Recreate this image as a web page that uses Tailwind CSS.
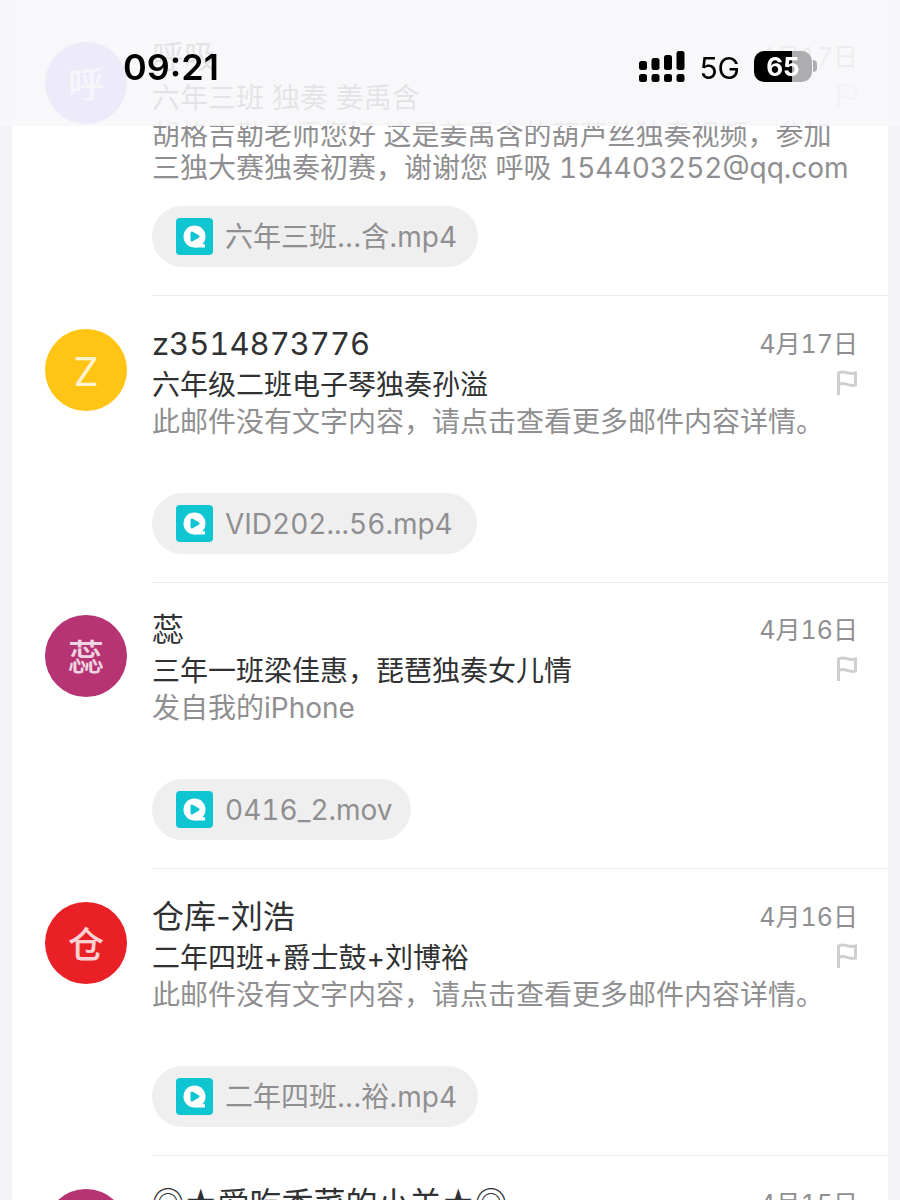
<!DOCTYPE html>
<html lang="zh-CN">
<head>
    <meta charset="UTF-8">
    <meta name="viewport" content="width=device-width, initial-scale=1.0">
    <title>收件箱</title>
    <script src="https://cdn.jsdelivr.net/npm/@tailwindcss/browser@4"></script>
</head>
<body class="bg-[#f2f2f7] font-['Inter','Noto_Sans_CJK_SC',sans-serif] text-[#303133]">
    <!-- Shared icons -->
    <svg class="hidden" aria-hidden="true">
        <symbol id="flag" viewBox="0 0 22 26">
            <path d="M2.500 25V3C6 1 9 2 12 3C15 3.800 17 3.500 19.500 3V15C16 16 13 15 11 14.300C8 13.300 5 13.500 2.500 14.500" fill="none" stroke="currentColor" stroke-width="3"/>
        </symbol>
        <symbol id="video" viewBox="0 0 37 37">
            <rect width="37" height="37" rx="4" fill="#10c5d2"/>
            <circle cx="18.500" cy="18.500" r="11" fill="#fff"/>
            <path d="M19 25L25 24Q26 26.500 29 26.500V29.500H18.500Z" fill="#fff"/>
            <path d="M16 15V22L22 18.500Z" fill="#10c5d2" stroke="#10c5d2" stroke-width="3" stroke-linejoin="round"/>
        </symbol>
    </svg>

    <!-- Status bar -->
    <header class="fixed inset-x-0 top-0 z-10 flex h-[126px] items-start justify-between bg-[#f7f7fa]/90 pt-[47px] pr-[83px] pl-[123px] text-black">
        <time class="text-4xl leading-10 font-semibold">09:21</time>
        <div class="flex h-[38px] items-center gap-[14px]">
            <svg class="h-8 w-[46px]" viewBox="0 0 46 32" aria-label="信号">
                <rect x="0" y="11" width="8" height="9" rx="2.500"/>
                <rect x="12.500" y="8" width="8" height="12" rx="2.500"/>
                <rect x="25" y="5" width="8" height="15" rx="2.500"/>
                <rect x="37.500" y="1" width="8" height="19" rx="2.500"/>
                <rect x="0" y="24" width="8" height="8" rx="2.500"/>
                <rect x="12.500" y="24" width="8" height="8" rx="2.500"/>
                <rect x="25" y="24" width="8" height="8" rx="2.500"/>
                <rect x="37.500" y="24" width="8" height="8" rx="2.500"/>
            </svg>
            <span class="pt-1 text-[30px] leading-9">5G</span>
            <div class="flex items-center gap-px">
                <div class="flex h-[31px] w-[58px] items-center justify-center rounded-[10px] bg-linear-to-r from-black from-65% to-[#adadaf] to-65% text-[26px] leading-[31px] font-bold text-white">65</div>
                <div class="h-3 w-1 rounded-r-full bg-[#adadaf]"></div>
            </div>
        </div>
    </header>

    <!-- Mail list -->
    <main class="mx-3 h-screen overflow-hidden bg-white pt-[9px]">
        <article class="flex gap-[25px] pl-[33px]">
            <div class="mt-[33px] flex size-[82px] shrink-0 items-center justify-center rounded-full bg-[#9375fa] pt-1 text-4xl font-medium text-white/80">呼</div>
            <div class="min-w-0 flex-1 border-b border-[#ececee] pt-[29px] pb-7">
                <div class="flex items-center justify-between pr-[30px]">
                    <h2 class="truncate text-[32px] leading-[38px]">呼吸</h2>
                    <time class="text-[25px] leading-[38px] text-[#8f8f91] tabular-nums">4月17日</time>
                </div>
                <div class="flex items-center justify-between pr-[30px]">
                    <p class="truncate pt-1 text-[28px] leading-9">六年三班 独奏 姜禹含</p>
                    <button class="text-[#cfcfd1]" aria-label="标记"><svg class="h-[26px] w-[22px]"><use href="#flag"/></svg></button>
                </div>
                <p class="mt-[3px] h-[66px] overflow-hidden pr-4 text-[28px] leading-[33px] text-[#8f8f91] tabular-nums">胡格吉勒老师您好 这是姜禹含的葫芦丝独奏视频，参加<br>三独大赛独奏初赛，谢谢您 呼吸 154403252@qq.com</p>
                <button class="mt-[21px] flex h-[61px] items-center gap-3 rounded-full bg-[#efefef] pr-[21px] pl-6 text-[28px] text-[#8f8f91]">
                    <svg class="size-[37px]"><use href="#video"/></svg>六年三班...含.mp4
                </button>
            </div>
        </article>

        <article class="flex gap-[25px] pl-[33px]">
            <div class="mt-[33px] flex size-[82px] shrink-0 items-center justify-center rounded-full bg-[#ffc414] pt-1 text-[40px] text-white/80">Z</div>
            <div class="min-w-0 flex-1 border-b border-[#ececee] pt-[29px] pb-7">
                <div class="flex items-center justify-between pr-[30px]">
                    <h2 class="truncate text-[31px] leading-[38px] tabular-nums">z3514873776</h2>
                    <time class="text-[25px] leading-[38px] text-[#8f8f91] tabular-nums">4月17日</time>
                </div>
                <div class="flex items-center justify-between pr-[30px]">
                    <p class="truncate pt-1 text-[28px] leading-9">六年级二班电子琴独奏孙溢</p>
                    <button class="text-[#cfcfd1]" aria-label="标记"><svg class="h-[26px] w-[22px]"><use href="#flag"/></svg></button>
                </div>
                <p class="mt-[3px] h-[66px] overflow-hidden pr-4 text-[28px] leading-[33px] text-[#8f8f91]">此邮件没有文字内容，请点击查看更多邮件内容详情。</p>
                <button class="mt-[21px] flex h-[61px] items-center gap-3 rounded-full bg-[#efefef] pr-6 pl-6 text-[28px] text-[#8f8f91] tabular-nums">
                    <svg class="size-[37px]"><use href="#video"/></svg>VID202...56.mp4
                </button>
            </div>
        </article>

        <article class="flex gap-[25px] pl-[33px]">
            <div class="mt-8 flex size-[82px] shrink-0 items-center justify-center rounded-full bg-[#b63473] pt-1 text-4xl font-medium text-white/80">蕊</div>
            <div class="min-w-0 flex-1 border-b border-[#ececee] pt-7 pb-7">
                <div class="flex items-center justify-between pr-[30px]">
                    <h2 class="truncate text-[32px] leading-[38px]">蕊</h2>
                    <time class="text-[25px] leading-[38px] text-[#8f8f91] tabular-nums">4月16日</time>
                </div>
                <div class="flex items-center justify-between pr-[30px]">
                    <p class="truncate pt-1 text-[28px] leading-9">三年一班梁佳惠，琵琶独奏女儿情</p>
                    <button class="text-[#cfcfd1]" aria-label="标记"><svg class="h-[26px] w-[22px]"><use href="#flag"/></svg></button>
                </div>
                <p class="mt-[3px] h-[66px] overflow-hidden pr-4 text-[28px] leading-[33px] text-[#8f8f91]">发自我的iPhone</p>
                <button class="mt-[21px] flex h-[61px] items-center gap-3 rounded-full bg-[#efefef] pr-[18px] pl-6 text-[28px] text-[#8f8f91] tabular-nums">
                    <svg class="size-[37px]"><use href="#video"/></svg>0416_2.mov
                </button>
            </div>
        </article>

        <article class="flex gap-[25px] pl-[33px]">
            <div class="mt-[33px] flex size-[82px] shrink-0 items-center justify-center rounded-full bg-[#ea2027] pt-1 text-4xl font-medium text-white/80">仓</div>
            <div class="min-w-0 flex-1 border-b border-[#ececee] pt-[29px] pb-7">
                <div class="flex items-center justify-between pr-[30px]">
                    <h2 class="truncate text-[32px] leading-[38px]">仓库-刘浩</h2>
                    <time class="text-[25px] leading-[38px] text-[#8f8f91] tabular-nums">4月16日</time>
                </div>
                <div class="flex items-center justify-between pr-[30px]">
                    <p class="truncate pt-1 text-[28px] leading-9">二年四班+爵士鼓+刘博裕</p>
                    <button class="text-[#cfcfd1]" aria-label="标记"><svg class="h-[26px] w-[22px]"><use href="#flag"/></svg></button>
                </div>
                <p class="mt-[3px] h-[66px] overflow-hidden pr-4 text-[28px] leading-[33px] text-[#8f8f91]">此邮件没有文字内容，请点击查看更多邮件内容详情。</p>
                <button class="mt-[21px] flex h-[61px] items-center gap-3 rounded-full bg-[#efefef] pr-[21px] pl-6 text-[28px] text-[#8f8f91]">
                    <svg class="size-[37px]"><use href="#video"/></svg>二年四班...裕.mp4
                </button>
            </div>
        </article>

        <article class="flex gap-[25px] pl-[33px]">
            <div class="mt-[33px] size-[82px] shrink-0 rounded-full bg-[#b63473]"></div>
            <div class="min-w-0 flex-1 pt-[29px]">
                <div class="flex items-center justify-between pr-[30px]">
                    <h2 class="truncate text-[32px] leading-[38px]">◎★爱吃香菜的小羊★◎</h2>
                    <time class="text-[25px] leading-[38px] text-[#8f8f91] tabular-nums">4月15日</time>
                </div>
            </div>
        </article>
    </main>
</body>
</html>
